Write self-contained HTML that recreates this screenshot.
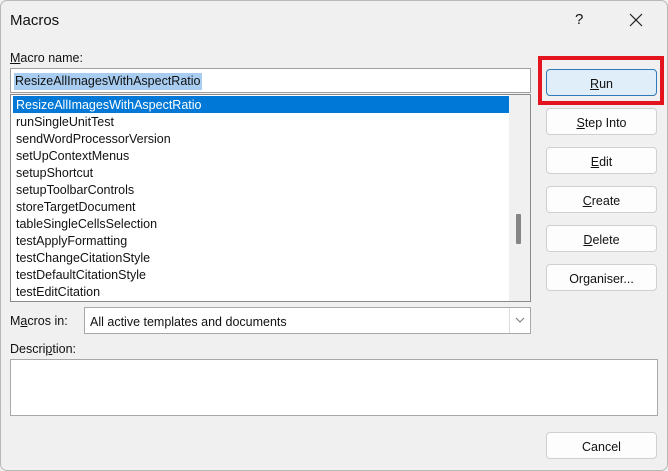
<!DOCTYPE html>
<html><head><meta charset="utf-8"><style>
*{box-sizing:border-box;margin:0;padding:0}
body{width:668px;height:471px;background:#f0f0f0;font-family:"Liberation Sans",sans-serif;font-size:12.5px;color:#111;position:relative;overflow:hidden}
.a{position:absolute}
.frame{left:0;top:0;width:668px;height:471px;border:1px solid #b8b8b8;border-radius:7px}
.btn{position:absolute;left:546px;width:111px;height:27px;background:#fdfdfd;border:1px solid #d0d0d0;border-radius:4px;text-align:center;line-height:29px;font-size:12.5px}
u{text-decoration:underline}
.item{position:absolute;left:2px;height:17px;line-height:19px;padding-left:3px;width:496px}
</style></head><body>
<div class="a frame"></div>
<div class="a" style="left:10px;top:12px;font-size:15px">Macros</div>
<div class="a" style="left:575px;top:11px;font-size:15px">?</div>
<svg class="a" style="left:629px;top:13px" width="14" height="14"><path d="M1 1L13 13M13 1L1 13" stroke="#222" stroke-width="1.2"/></svg>
<div class="a" style="left:10px;top:51px"><u>M</u>acro name:</div>
<div class="a" style="left:10px;top:68px;width:521px;height:25px;background:#fff;border:1px solid #a0a0a0">
 <span class="a" style="left:3px;top:4px;background:#a8cdf0;padding:0 1px;line-height:17px">ResizeAllImagesWithAspectRatio</span>
</div>
<div class="a" style="left:10px;top:94px;width:521px;height:208px;background:#fff;border:1px solid #8a8a8a">
 <div class="item" style="top:1px;background:#0078d7;color:#fff">ResizeAllImagesWithAspectRatio</div>
 <div class="item" style="top:18px">runSingleUnitTest</div>
 <div class="item" style="top:35px">sendWordProcessorVersion</div>
 <div class="item" style="top:52px">setUpContextMenus</div>
 <div class="item" style="top:69px">setupShortcut</div>
 <div class="item" style="top:86px">setupToolbarControls</div>
 <div class="item" style="top:103px">storeTargetDocument</div>
 <div class="item" style="top:120px">tableSingleCellsSelection</div>
 <div class="item" style="top:137px">testApplyFormatting</div>
 <div class="item" style="top:154px">testChangeCitationStyle</div>
 <div class="item" style="top:171px">testDefaultCitationStyle</div>
 <div class="item" style="top:188px">testEditCitation</div>
 <div class="a" style="left:498px;top:0;width:21px;height:206px;background:#f0f0f0"></div>
 <div class="a" style="left:505px;top:119px;width:5px;height:30px;background:#858585;border-radius:1px"></div>
</div>
<div class="a" style="left:10px;top:314px">M<u>a</u>cros in:</div>
<div class="a" style="left:84px;top:307px;width:447px;height:27px;background:#fff;border:1px solid #a8a8a8">
 <span class="a" style="left:5px;top:7px">All active templates and documents</span>
 <div class="a" style="right:0;top:0;width:21px;height:25px;border-left:1px solid #ddd"></div>
 <svg class="a" style="right:5px;top:9px" width="10" height="6"><path d="M1 1L5 5L9 1" stroke="#777" fill="none"/></svg>
</div>
<div class="a" style="left:10px;top:342px">Descri<u>p</u>tion:</div>
<div class="a" style="left:10px;top:359px;width:648px;height:57px;background:#fff;border:1px solid #a8a8a8"></div>
<div class="a" style="left:538px;top:56px;width:126px;height:49px;border:4px solid #e3141e"></div>
<div class="btn" style="top:69px;background:#e0eef9;border-color:#2f7ab8"><u>R</u>un</div>
<div class="btn" style="top:108px"><u>S</u>tep Into</div>
<div class="btn" style="top:147px"><u>E</u>dit</div>
<div class="btn" style="top:186px"><u>C</u>reate</div>
<div class="btn" style="top:225px"><u>D</u>elete</div>
<div class="btn" style="top:264px">Or<u>g</u>aniser...</div>
<div class="btn" style="top:432px">Cancel</div>
</body></html>
